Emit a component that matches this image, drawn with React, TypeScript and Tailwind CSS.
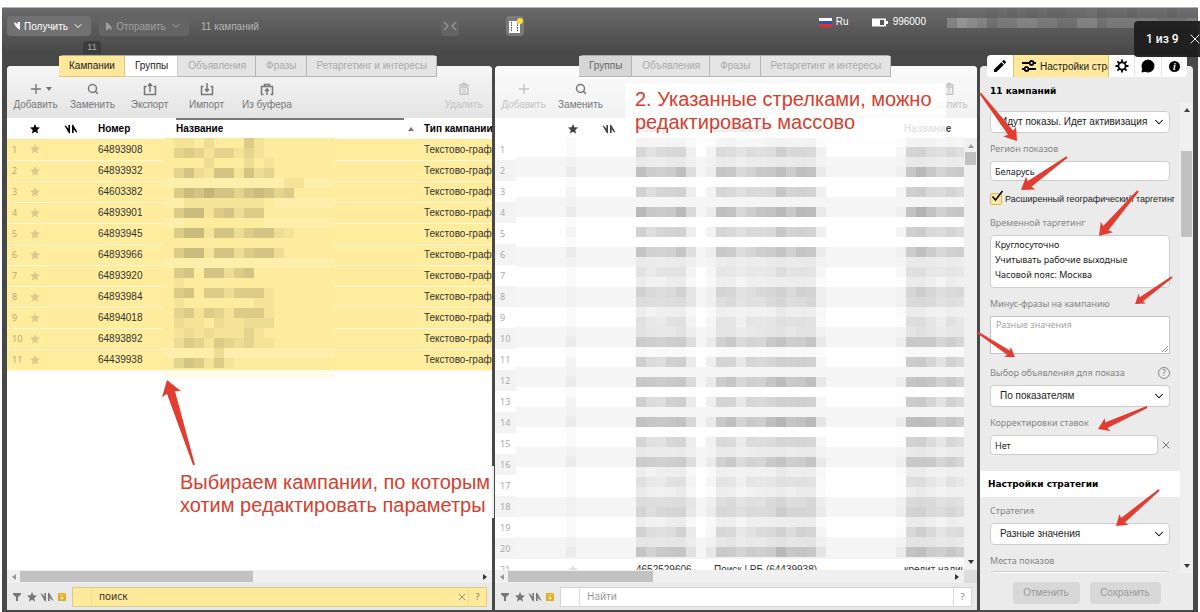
import { useId, type ReactNode } from "react";
import { clsx } from "clsx";
import { ChevronDown, MessageCircle, Search, X } from "lucide-react";
import { MdEdit, MdStar } from "react-icons/md";

const CAMPAIGNS = [
  "64893908",
  "64893932",
  "64603382",
  "64893901",
  "64893945",
  "64893966",
  "64893920",
  "64893984",
  "64894018",
  "64893892",
  "64439938",
];

const GROUP_ROWS = Array.from({ length: 21 }, (_, i) => i + 1);

// one string per 10px strip, one digit per cell: 0 = plain, 9 = darkest, w = lighter than the row
const CAMPAIGN_MOSAIC = [
  "01102000410000000",
  "03431331310000000",
  "00002000201000000",
  "03521551523000000",
  "wwwwwwwwwwww11www",
  "04657553565340000",
  "ww111111110wwwwww",
  "04661452440000000",
  "ww00000000wwwwwww",
  "04661552455210000",
  "00000000000000000",
  "04661552455200000",
  "wwwwwwwwwwwwwwwww",
  "04505524500000000",
  "01000000000000000",
  "04504424441000000",
  "01000000011000000",
  "03414314441000000",
  "02110211222000000",
  "01212111310000000",
  "02431432311000000",
  "wwwww2wwwwwwwwwww",
  "03541410000000000",
];

// column -> darkness, strip -> strength, strip -> white or gray row
const GROUP_COLS: Record<number, number> = {
  12: 9, 13: 7, 14: 7, 15: 8, 16: 9, 17: 4,
  19: 2, 20: 8, 21: 8, 22: 5, 23: 7, 24: 7, 25: 8, 26: 10, 27: 8, 28: 9, 29: 9, 30: 2,
  38: 1, 39: 9, 40: 10, 41: 8, 42: 6, 43: 8, 44: 7,
};
const STRENGTHS = [
  2, 7, 2, 9, 0, 8, 0, 10, 0, 8, 0, 8, 2, 5, 3, 6, 5, 3, 5, 3, 8, 1, 8, 0, 9, 0, 8, 0, 10, 0, 7, 2,
  8, 3, 5, 3, 5, 6, 3, 7, 3, 9,
];
const STRIPES = "wwggwwggwwwggwwggwwggwwggwwggwwggwwwggwwgg";

function Mosaic() {
  return (
    <svg width="170" height="240" className="block" shapeRendering="crispEdges" aria-hidden="true">
      <rect width="170" height="232" fill="#feec9e" />
      <rect y="232" width="170" height="8" fill="#fffbe9" />
      {CAMPAIGN_MOSAIC.map((line, y) =>
        line.split("").map((c, x) =>
          c === "0" ? null : (
            <rect
              key={`${x}-${y}`}
              x={x * 10}
              y={y * 10}
              width="10"
              height="10"
              fill={c === "w" ? "#fff" : "#6b6440"}
              opacity={c === "w" ? 0.15 : Number(c) * 0.058}
            />
          ),
        ),
      )}
    </svg>
  );
}

function GroupMosaic() {
  return (
    <svg width="100%" height="420" className="block" shapeRendering="crispEdges" aria-hidden="true">
      {STRENGTHS.map((strength, y) => (
        <g key={y}>
          <rect y={y * 10} width="100%" height="10" fill={STRIPES[y] === "g" ? "#f5f5f5" : "#fefefe"} />
          <rect x="50" y={y * 10} width="10" height="10" opacity={strength > 7 ? 0.04 : 0.015} />
          {Object.entries(GROUP_COLS).map(([x, level]) => {
            const shift = ((Number(x) * 7 + y * 5) % 4) - 1;
            return (
              <rect
                key={x}
                x={Number(x) * 10}
                y={y * 10}
                width="10"
                height="10"
                opacity={Math.max(0, (strength * (level + shift * 0.5)) / 410)}
              />
            );
          })}
        </g>
      ))}
    </svg>
  );
}

function FlagPair({ className }: { className?: string }) {
  return (
    <svg viewBox="0 0 14 12" className={clsx("inline-block h-3 w-3.5", className)} fill="currentColor" aria-hidden="true">
      <path d="M.5 2.5L2 2.8l2.4 3V2H6v8.5L4.4 9.6z" />
      <path d="M13.5 9.5l-1.5-.3-2.4-3V10H8V1.5l1.6.9z" />
    </svg>
  );
}

function Tray({ up, basket }: { up?: boolean; basket?: boolean }) {
  return (
    <svg viewBox="0 0 14 14" className="size-3.5" fill="none" stroke="currentColor" strokeWidth="1.5" aria-hidden="true">
      {basket ? (
        <>
          <path d="M3.5 12.5h-2v-8h11v8h-2M4.5 4.5v-2h5v2" />
          <path d="M7 13V7M5 9l2-2.2L9 9" />
        </>
      ) : (
        <>
          <path d="M3.5 4.5h-2v8h11v-8h-2" />
          <path d={up ? "M7 10V2M5 4l2-2.3L9 4" : "M7 1v8M5 7l2 2.3L9 7"} />
        </>
      )}
    </svg>
  );
}

function Bin() {
  return (
    <svg viewBox="0 0 12 14" className="h-3.5 w-3" fill="none" stroke="currentColor" aria-hidden="true">
      <path d="M1 3h10M4 1.5h4" strokeWidth="1.5" />
      <path d="M2.2 5h7.6v7.3H2.2z" strokeWidth="1.4" />
      <path d="M5 6v5M7 6v5" />
    </svg>
  );
}

function Plus() {
  return (
    <svg viewBox="0 0 12 12" className="size-3" stroke="currentColor" strokeWidth="1.4" aria-hidden="true">
      <path d="M6 1v10M1 6h10" />
    </svg>
  );
}

function Triangle({ dir, className }: { dir: "up" | "down" | "left" | "right"; className?: string }) {
  const points = { up: "0,5 6,5 3,1", down: "0,1 6,1 3,5", left: "5,0 5,6 1,3", right: "1,0 1,6 5,3" };
  return (
    <svg viewBox="0 0 6 6" className={clsx("size-1.5 shrink-0", className)} fill="currentColor" aria-hidden="true">
      <polygon points={points[dir]} />
    </svg>
  );
}

function Tool({ label, dim, wide, children }: { label: string; dim?: boolean; wide?: boolean; children: ReactNode }) {
  return (
    <button
      type="button"
      disabled={dim}
      className={clsx(
        "flex shrink-0 flex-col items-center whitespace-nowrap font-['Liberation_Sans',sans-serif] text-[10px] leading-3",
        wide ? "w-16" : "w-[57px]",
        dim ? "text-[#c3c3c3]" : "text-[#777]",
      )}
    >
      <span className="mb-[3px] flex h-3.5 items-center gap-1">{children}</span>
      {label}
    </button>
  );
}

function Tabs({ items, active, className }: { items: string[]; active?: string; className?: string }) {
  return (
    <nav
      className={clsx(
        "relative z-10 -mb-[11px] flex h-[22px] overflow-visible rounded-sm border-t border-[#aaa] font-['Liberation_Sans',sans-serif] text-[10px]",
        className,
      )}
    >
      {items.map((t) => (
        <button
          type="button"
          key={t}
          className={clsx(
            "relative shrink-0 whitespace-nowrap border-b border-r pl-2.5 pr-[9px] leading-5",
            t === active && "border-[#dcc878] bg-[#ffe79b] text-[#222]",
            t !== active && t === "Группы" && active && "border-[#ccc] bg-white text-[#222]",
            t !== active && t === "Группы" && !active && "border-[#b5b5b5] bg-[#d6d6d6] text-[#666]",
            t !== active && t !== "Группы" && "border-[#b5b5b5] bg-[#e4e4e4] text-[#a9a9a9]",
          )}
        >
          {t}
          {t === active && (
            <span className="absolute -top-[15px] left-6 w-[18px] rounded-t-sm bg-[#3c3c3c] text-center text-[9px] leading-[13px] text-[#aaa]">
              11
            </span>
          )}
        </button>
      ))}
    </nav>
  );
}

function HScroll({ corner, thumb }: { corner?: boolean; thumb: string }) {
  return (
    <div className="flex h-[13px] shrink-0 items-center bg-[#f0f0f0]">
      <Triangle dir="left" className="ml-1 mr-[3px] text-[#999]" />
      <div className={clsx("h-[11px] bg-[#c1c1c1]", thumb)} />
      <Triangle dir="right" className="ml-auto mr-1 text-[#333]" />
      {corner && <div className="h-full w-[13px] bg-[#dcdcdc]" />}
    </div>
  );
}

function FilterBar({ active }: { active?: boolean }) {
  return (
    <form className="flex h-[27px] shrink-0 items-center bg-[#e9e9e9] pl-0.5 pr-[5px] text-[#777]">
      <button type="button" aria-label="Фильтр" className="w-[15px]">
        <svg viewBox="0 0 8 8" className="mx-auto size-2" fill="currentColor">
          <path d="M0 0h8v1.4L5 4v4H3V4L0 1.4z" />
        </svg>
      </button>
      <button type="button" aria-label="Избранное" className="flex w-[15px] justify-center">
        <MdStar className="size-3 shrink-0" />
      </button>
      <button type="button" aria-label="Изменённые" className="flex w-4 justify-center">
        <FlagPair className="h-2.5 w-3" />
      </button>
      <button type="button" aria-label="Архив" className="w-3.5">
        <svg viewBox="0 0 8 8" className="mx-auto size-2">
          <rect width="8" height="8" rx="1" fill="#dfae1c" />
          <path d="M1 1.8h6" stroke="#f5dd8f" strokeWidth=".7" />
          <path d="M2.5 5h3M4 3.5v3" stroke="#fff" />
        </svg>
      </button>
      <div
        className={clsx(
          "ml-[3px] flex h-5 min-w-0 flex-1 items-center border",
          active ? "border-[#dccb86] bg-[#ffe99b]" : "border-[#d4d4d4] bg-white",
        )}
      >
        <span className={clsx("h-full w-[19px] border-r", active ? "border-[#eedb95]" : "border-[#ddd]")} />
        <input
          aria-label="Поиск по таблице"
          defaultValue={active ? "поиск" : ""}
          placeholder="Найти"
          className="min-w-0 flex-1 bg-transparent pl-[7px] text-[10px] text-[#333] outline-none placeholder:text-[#999]"
        />
        {active && (
          <button type="button" aria-label="Очистить">
            <X className="size-3" strokeWidth={1.5} />
          </button>
        )}
        <button
          type="button"
          className={clsx("h-full w-[18px] border-l text-[9px]", active ? "border-[#eedb95]" : "border-[#ddd]")}
        >
          ?
        </button>
      </div>
    </form>
  );
}

function CampaignPanel() {
  return (
    <section className="flex min-w-0 flex-[485] flex-col">
      <Tabs
        className="ml-[52px] self-start"
        active="Кампании"
        items={["Кампании", "Группы", "Объявления", "Фразы", "Ретаргетинг и интересы"]}
      />
      <div className="flex min-h-0 flex-1 flex-col overflow-hidden rounded-t-sm bg-white">
        <div className="flex h-[52px] shrink-0 bg-linear-to-b from-[#f6f6f6] to-[#e4e4e4] pt-4">
          <Tool label="Добавить">
            <span className="w-1.5" />
            <Plus />
            <Triangle dir="down" />
          </Tool>
          <Tool label="Заменить">
            <Search className="size-3" strokeWidth={3} />
          </Tool>
          <Tool label="Экспорт">
            <Tray up />
          </Tool>
          <Tool label="Импорт">
            <Tray />
          </Tool>
          <Tool label="Из буфера" wide>
            <Tray basket />
          </Tool>
          <div className="flex-1" />
          <Tool label="Удалить" dim>
            <Bin />
          </Tool>
        </div>
        <div className="relative min-h-0 flex-1 overflow-hidden">
          <table className="w-full table-fixed text-left font-['Liberation_Sans',sans-serif] text-[10px]">
            <colgroup>
              <col className="w-[17px]" />
              <col className="w-[22px]" />
              <col className="w-[50px]" />
              <col className="w-[78px]" />
              <col className="w-[248px]" />
              <col />
            </colgroup>
            <thead>
              <tr className="h-[21px] text-black">
                <th />
                <th>
                  <MdStar className="mx-auto size-3" />
                </th>
                <th className="text-center">
                  <FlagPair className="align-middle" />
                </th>
                <th className="pl-0.5">Номер</th>
                <th className="p-0 pl-0.5">
                  <div className="flex h-[21px] items-center">
                    <span className="h-full flex-1 border-t-2 border-[#777] leading-[17px]">Название</span>
                    <Triangle dir="up" className="mx-1 mr-2 text-[#777]" />
                  </div>
                </th>
                <th className="whitespace-nowrap pl-0.5">Тип кампании</th>
              </tr>
            </thead>
            <tbody>
              {CAMPAIGNS.map((id, i) => (
                <tr key={id} className="h-[21px] border-b border-[#fdf8dc] bg-[#ffec9c] text-[#333]">
                  <td className="whitespace-nowrap pl-[5px] font-['Noto_Sans',sans-serif] text-[9px] text-[#b3aa83]">
                    {i + 1}
                  </td>
                  <td>
                    <MdStar className="mx-auto size-3 text-[#d9ca8d]" />
                  </td>
                  <td />
                  <td className="pl-0.5">{id}</td>
                  <td />
                  <td className="overflow-hidden whitespace-nowrap pl-0.5">Текстово-графическая</td>
                </tr>
              ))}
            </tbody>
          </table>
          <div className="absolute left-[157px] top-5">
            <Mosaic />
          </div>
          <p className="absolute left-[173px] top-[353px] whitespace-nowrap font-['Liberation_Sans',sans-serif] text-xl leading-[23px] text-[#d6402f]">
            Выбираем кампании, по которым
            <br />
            хотим редактировать параметры
          </p>
        </div>
        <HScroll thumb="w-[48%]" />
        <FilterBar active />
      </div>
    </section>
  );
}

function GroupPanel() {
  return (
    <section className="flex min-w-0 flex-[482] flex-col">
      <Tabs className="ml-[84px] self-start" items={["Группы", "Объявления", "Фразы", "Ретаргетинг и интересы"]} />
      <div className="relative flex min-h-0 flex-1 flex-col overflow-hidden rounded-t-sm bg-white">
        <div className="flex h-[52px] shrink-0 bg-linear-to-b from-[#fbfbfb] to-[#f1f1f1] pt-4">
          <Tool label="Добавить" dim>
            <Plus />
          </Tool>
          <Tool label="Заменить">
            <Search className="size-3" strokeWidth={3} />
          </Tool>
          <div className="flex-1" />
          <Tool label="Удалить" dim>
            <Bin />
          </Tool>
        </div>
        <div className="flex min-h-0 flex-1">
          <div className="relative min-w-0 flex-1 overflow-hidden">
            <table className="w-full table-fixed text-left font-['Liberation_Sans',sans-serif] text-[10px]">
              <colgroup>
                <col className="w-[66px]" />
                <col className="w-6" />
                <col className="w-12" />
                <col className="w-[78px]" />
                <col className="w-[190px]" />
                <col />
              </colgroup>
              <thead>
                <tr className="h-[21px] text-[#444]">
                  <th />
                  <th>
                    <MdStar className="mx-auto size-3" />
                  </th>
                  <th className="text-center">
                    <FlagPair className="align-middle" />
                  </th>
                  <th className="pl-[3px]">Номер</th>
                  <th className="pl-[3px]">Кампания</th>
                  <th className="pl-[3px]">Название</th>
                </tr>
              </thead>
              <tbody>
                {GROUP_ROWS.map((n) => (
                  <tr key={n} className="h-[21px] text-[#333] even:bg-[#f3f3f3]">
                    <td className="pl-[5px] font-['Noto_Sans',sans-serif] text-[9px] text-[#aaa]">{n}</td>
                    <td>
                      <MdStar className="mx-auto size-3 text-[#ddd]" />
                    </td>
                    <td />
                    <td className="pl-[3px]">{n === 21 && "4652529606"}</td>
                    <td className="pl-[3px]">{n === 21 && "Поиск | РБ (64439938)"}</td>
                    <td className="overflow-hidden whitespace-nowrap pl-[3px]">{n === 21 && "кредит наличными"}</td>
                  </tr>
                ))}
              </tbody>
            </table>
            <div className="absolute left-[21px] right-0 top-[19px]">
              <GroupMosaic />
            </div>
          </div>
          <div className="mt-5 flex w-[13px] flex-col items-center bg-[#f0f0f0] py-[5px]">
            <Triangle dir="up" className="text-[#999]" />
            <div className="mt-[3px] h-[13px] w-[11px] bg-[#c1c1c1]" />
            <Triangle dir="down" className="mt-auto text-[#333]" />
          </div>
        </div>
        <div className="absolute left-[130px] top-[17px] h-[55px] w-[321px] bg-white/85">
          <p className="whitespace-nowrap pl-2.5 pt-[5px] font-['Liberation_Sans',sans-serif] text-xl leading-[23px] text-[#d6402f]">
            2. Указанные стрелками, можно
            <br />
            редактировать массово
          </p>
        </div>
        <HScroll corner thumb="w-[30%]" />
        <FilterBar />
      </div>
    </section>
  );
}

function Label({ htmlFor, children }: { htmlFor?: string; children: ReactNode }) {
  return (
    <label htmlFor={htmlFor} className="block h-3 whitespace-nowrap text-[#858585]">
      {children}
    </label>
  );
}

function Select({ id, label, value }: { id?: string; label?: string; value: string }) {
  return (
    <div className="relative w-[180px]">
      <select
        id={id}
        aria-label={label}
        className="block h-[22px] w-full appearance-none rounded-sm border border-[#ccc] bg-white pl-[9px] font-['Liberation_Sans',sans-serif] text-[10px] text-[#222]"
      >
        <option>{value}</option>
      </select>
      <ChevronDown className="pointer-events-none absolute right-1 top-1 size-3.5" strokeWidth={1.8} />
    </div>
  );
}

function SettingsPanel() {
  const id = useId();
  return (
    <aside className="flex w-[213px] shrink-0 flex-col">
      <nav className="relative z-10 -mb-[11px] ml-[7px] mr-1.5 flex h-[22px] overflow-hidden rounded-sm bg-white text-black">
        <button type="button" aria-label="Правка" className="flex w-[26px] items-center justify-center">
          <MdEdit className="size-4" />
        </button>
        <button
          type="button"
          className="flex w-24 items-center gap-1 overflow-hidden border-x border-[#dcc878] bg-[#ffe79b] pl-2 font-['Liberation_Sans',sans-serif] text-[10px] text-[#222]"
        >
          <svg viewBox="0 0 14 12" className="h-3 w-3.5 shrink-0" fill="none" stroke="#000" strokeWidth="1.8">
            <path d="M0 3h7M12 3h2M0 9h2M7 9h7" />
            <circle cx="9.5" cy="3" r="2" />
            <circle cx="4.5" cy="9" r="2" />
          </svg>
          <span className="whitespace-nowrap">Настройки стратегии</span>
        </button>
        <button type="button" aria-label="Параметры" className="flex flex-1 items-center justify-center border-r border-[#e4e4e4]">
          <svg viewBox="0 0 14 14" className="size-3.5" fill="none" stroke="currentColor" strokeWidth="1.8">
            <circle cx="7" cy="7" r="3.6" />
            <path d="M7 .5v3M7 10.5v3M.5 7h3M10.5 7h3M2.4 2.4l2 2M9.6 9.6l2 2M2.4 11.6l2-2M9.6 4.4l2-2" />
          </svg>
        </button>
        <button type="button" aria-label="Комментарии" className="flex flex-1 items-center justify-center border-r border-[#e4e4e4]">
          <MessageCircle className="size-3.5" fill="currentColor" />
        </button>
        <button type="button" aria-label="Информация" className="flex flex-1 items-center justify-center">
          <span className="size-[11px] rounded-full bg-black text-center font-['Liberation_Serif',serif] text-[10px] font-bold italic leading-[11px] text-white">
            i
          </span>
        </button>
      </nav>
      <div className="flex min-h-0 flex-1 flex-col overflow-hidden rounded-t-sm bg-[#ebebeb] font-['Noto_Sans',sans-serif] text-[9px] leading-3">
        <h2 className="mb-1.5 shrink-0 pl-2.5 pt-[19px] font-['DejaVu_Sans',sans-serif] text-[9px] font-bold text-black">
          11 кампаний
        </h2>
        <div className="flex min-h-0 flex-1">
          <div className="min-w-0 flex-1 overflow-hidden">
            <div className="pl-2.5 pr-2 pt-2">
              <Select label="Состояние" value="Идут показы. Идет активизация" />
              <div className="pt-2.5">
                <Label htmlFor={`${id}-region`}>Регион показов</Label>
                <input
                  id={`${id}-region`}
                  defaultValue="Беларусь"
                  className="mt-1.5 block h-5 w-[180px] rounded-sm border border-[#ccc] bg-white px-1 text-[#222]"
                />
              </div>
              <div className="relative mt-3 flex h-3 items-center">
                <input
                  id={`${id}-geo`}
                  type="checkbox"
                  defaultChecked
                  className="size-3 shrink-0 appearance-none rounded-xs border border-[#cdb76b] bg-[#ffe79b]"
                />
                <svg viewBox="0 0 14 14" className="pointer-events-none absolute -top-1 left-0 size-3.5" fill="none" stroke="#000" strokeWidth="1.5">
                  <path d="M2.5 7.5L5.5 11 12.5 2" />
                </svg>
                <label htmlFor={`${id}-geo`} className="whitespace-nowrap pl-[3px] font-['Liberation_Sans',sans-serif] text-[9px] text-[#222]">
                  Расширенный географический таргетинг
                </label>
              </div>
              <div className="pt-3">
                <Label htmlFor={`${id}-time`}>Временной таргетинг</Label>
                <textarea
                  id={`${id}-time`}
                  readOnly
                  defaultValue={"Круглосуточно\nУчитывать рабочие выходные\nЧасовой пояс: Москва"}
                  className="mt-1.5 block h-[53px] w-[180px] resize-none overflow-hidden rounded-sm border border-[#ccc] bg-white px-1 py-px leading-[15px] text-[#222]"
                />
              </div>
              <div className="pt-2.5">
                <Label htmlFor={`${id}-minus`}>Минус-фразы на кампанию</Label>
                <textarea
                  id={`${id}-minus`}
                  placeholder="Разные значения"
                  className="mt-1.5 block h-[38px] w-[180px] resize-none border border-[#c4c4c4] bg-white px-[5px] py-0.5 placeholder:text-[#a5a5a5]"
                />
                <svg viewBox="0 0 8 8" className="-mt-[9px] ml-[171px] block size-2" stroke="#777" strokeWidth=".8">
                  <path d="M1 7l6-6M4 7l3-3" />
                </svg>
              </div>
              <div className="pt-3.5">
                <div className="flex w-[180px] justify-between">
                  <Label htmlFor={`${id}-pick`}>Выбор объявления для показа</Label>
                  <button
                    type="button"
                    className="size-3 rounded-full border border-[#888] text-center text-[8px] leading-[10px] text-[#777]"
                  >
                    ?
                  </button>
                </div>
                <div className="pt-1.5">
                  <Select id={`${id}-pick`} value="По показателям" />
                </div>
              </div>
              <div className="pt-2.5">
                <Label htmlFor={`${id}-bid`}>Корректировки ставок</Label>
                <div className="mt-1.5 flex items-center gap-0.5">
                  <input
                    id={`${id}-bid`}
                    defaultValue="Нет"
                    className="h-5 w-[169px] rounded-sm border border-[#ccc] bg-white px-1 text-[#222]"
                  />
                  <button type="button" aria-label="Сбросить" className="text-[#777]">
                    <X className="size-3" strokeWidth={2} />
                  </button>
                </div>
              </div>
            </div>
            <h3 className="mt-4 bg-white pl-2 font-['DejaVu_Sans',sans-serif] text-[9px] font-bold leading-[26px] text-black">Настройки стратегии</h3>
            <div className="pl-2.5 pt-2">
              <Label htmlFor={`${id}-strategy`}>Стратегия</Label>
              <div className="pb-2.5 pt-1.5">
                <Select id={`${id}-strategy`} value="Разные значения" />
              </div>
              <Label htmlFor={`${id}-place`}>Места показов</Label>
              <div className="pt-1">
                <Select id={`${id}-place`} value="Все площадки" />
              </div>
            </div>
          </div>
          <div className="flex w-[13px] flex-col items-center bg-[#f0f0f0] pb-1 pt-1">
            <Triangle dir="up" className="text-[#444]" />
            <div className="mt-[38px] h-[86px] w-[11px] bg-[#c1c1c1]" />
            <Triangle dir="down" className="mt-auto text-[#333]" />
          </div>
        </div>
        <div className="flex h-[37px] shrink-0 justify-center gap-2.5 pt-[9px] font-['Liberation_Sans',sans-serif] text-[10px] text-[#999]">
          <button type="button" disabled className="h-[22px] w-[67px] rounded-sm bg-[#d8d8d8]">
            Отменить
          </button>
          <button type="button" disabled className="h-[22px] w-[71px] rounded-sm bg-[#d8d8d8]">
            Сохранить
          </button>
        </div>
      </div>
    </aside>
  );
}

function AccountMosaic() {
  const top = "0111010101001120110111011";
  const row = "4654233443322442333332223";
  return (
    <svg width="250" height="20" className="block" shapeRendering="crispEdges" aria-hidden="true">
      {row.split("").map((c, i) => (
        <g key={i} fill="#fff">
          <rect x={i * 10} width="10" height="10" opacity={Number(top[i]) * 0.03} />
          <rect x={i * 10} y="10" width="10" height="10" opacity={Number(c) * 0.055} />
        </g>
      ))}
    </svg>
  );
}

function TopBar() {
  return (
    <header className="flex h-[47px] shrink-0 items-start pl-[5px] font-['Liberation_Sans',sans-serif] text-[10px]">
      <div className="flex flex-[485] items-center pt-2">
        <button
          type="button"
          className="mr-2 flex h-5 w-[84px] items-center justify-center gap-1 rounded-sm bg-[#717171] text-white"
        >
          <svg viewBox="0 0 6 8" className="h-2 w-1.5" fill="currentColor">
            <path d="M0 0l3.8 2V0H6v8L3.8 6.5 1 3.5z" />
          </svg>
          Получить
          <ChevronDown className="size-3" />
        </button>
        <button
          type="button"
          className="mr-3 flex h-5 w-[90px] items-center justify-center gap-1 rounded-sm bg-[#646464] text-[#a0a0a0]"
        >
          <svg viewBox="0 0 6 8" className="h-2 w-1.5" fill="currentColor">
            <path d="M0 0l2.2 1.5L5 4.5 6 8 2.2 6v2H0z" />
          </svg>
          Отправить
          <ChevronDown className="size-3" />
        </button>
        <span className="text-[#b5b5b5]">11 кампаний</span>
        <button type="button" aria-label="Свернуть" className="ml-auto mr-[35px] flex h-5 w-[18px] items-center justify-center rounded-sm bg-[#646464] text-[#999]">
          <svg viewBox="0 0 14 10" className="h-2.5 w-3.5" fill="none" stroke="currentColor" strokeWidth="1.2">
            <path d="M1 1l4 4-4 4M13 1L9 5l4 4" />
          </svg>
        </button>
      </div>
      <div className="flex flex-[452] items-start pt-2">
        <button type="button" aria-label="Журнал" className="ml-3 flex h-5 w-[18px] items-center justify-center rounded-sm bg-[#7a7a7a]">
          <svg viewBox="0 0 16 16" className="size-4">
            <path d="M2 3h11v12H2z" fill="#fff" />
            <path d="M4.5 4v10M10.5 4v10" stroke="#444" strokeDasharray="1.5 1" />
            <circle cx="13" cy="3" r="3" fill="#ffdb33" />
          </svg>
        </button>
        <div className="ml-auto flex items-center pr-[21px] leading-3 text-white">
          <svg viewBox="0 0 13 9" className="mr-1 h-[9px] w-[13px]">
            <path d="M0 0h13v3H0z" fill="#fff" />
            <path d="M0 3h13v3H0z" fill="#2a56b5" />
            <path d="M0 6h13v3H0z" fill="#d8333a" />
          </svg>
          <span className="mr-[23px]">Ru</span>
          <svg viewBox="0 0 16 9" className="mr-[5px] h-[9px] w-4">
            <path d="M0 .5h14v8H0zM14 3h2v3h-2z" fill="#fff" />
            <path d="M8 2h4v5H8z" fill="#555" />
          </svg>
          <span>996000</span>
        </div>
      </div>
      <div className="w-[251px] shrink-0 overflow-hidden">
        <AccountMosaic />
      </div>
    </header>
  );
}

// tail, tip, half width of the head
const ARROWS = [
  [980, 93, 1017, 141, 8],
  [1067, 157, 1021, 190, 8],
  [1138, 191, 1099, 236, 8],
  [1172, 277, 1135, 304, 6],
  [977, 332, 1015, 357, 6],
  [1147, 407, 1098, 429, 7],
  [1159, 490, 1116, 526, 7],
  [194, 465, 167, 380, 10],
];

function Arrows() {
  return (
    <svg viewBox="0 0 1200 612" className="pointer-events-none absolute inset-0 z-20 size-full" fill="#e23d30" aria-hidden="true">
      {ARROWS.map(([x1, y1, x2, y2, r]) => {
        const len = Math.hypot(x2 - x1, y2 - y1);
        const angle = (Math.atan2(y2 - y1, x2 - x1) * 180) / Math.PI;
        const neck = len - r * 1.3;
        return (
          <polygon
            key={`${x1}-${y1}`}
            transform={`translate(${x1} ${y1}) rotate(${angle})`}
            points={`0,-1 ${neck},${-r * 0.42} ${len - r * 1.5},${-r} ${len},0 ${len - r * 1.5},${r} ${neck},${r * 0.42} 0,1`}
          />
        );
      })}
    </svg>
  );
}

export default function App() {
  return (
    <div className="relative flex h-screen flex-col overflow-hidden bg-white px-0.5 pt-[7px] font-['Noto_Sans',sans-serif]">
      <div className="flex min-h-0 flex-1 flex-col border-t border-[#aab4c0] bg-[#484848] bg-linear-to-b from-[#6a6a6a] to-[#484848] to-[45px] pb-0.5">
        <TopBar />
        <main className="flex min-h-0 flex-1 pl-[5px] pr-[5px]">
          <CampaignPanel />
          <div className="w-[3px] shrink-0 pt-[411px]">
            <div className="h-[52px] w-0.5 bg-[#eee]" />
          </div>
          <GroupPanel />
          <div className="w-[3px] shrink-0" />
          <SettingsPanel />
        </main>
      </div>
      <Arrows />
      <div className="absolute right-0 top-[21px] z-30 flex h-9 w-[66px] items-center gap-2 overflow-hidden rounded-l bg-[#1e1e1e]/95 pl-3 font-['Roboto',sans-serif] text-xs font-medium text-white">
        <span className="whitespace-nowrap">1 из 9</span>
        <button type="button" aria-label="Закрыть" className="shrink-0">
          <X className="size-4" strokeWidth={1.5} />
        </button>
      </div>
    </div>
  );
}
